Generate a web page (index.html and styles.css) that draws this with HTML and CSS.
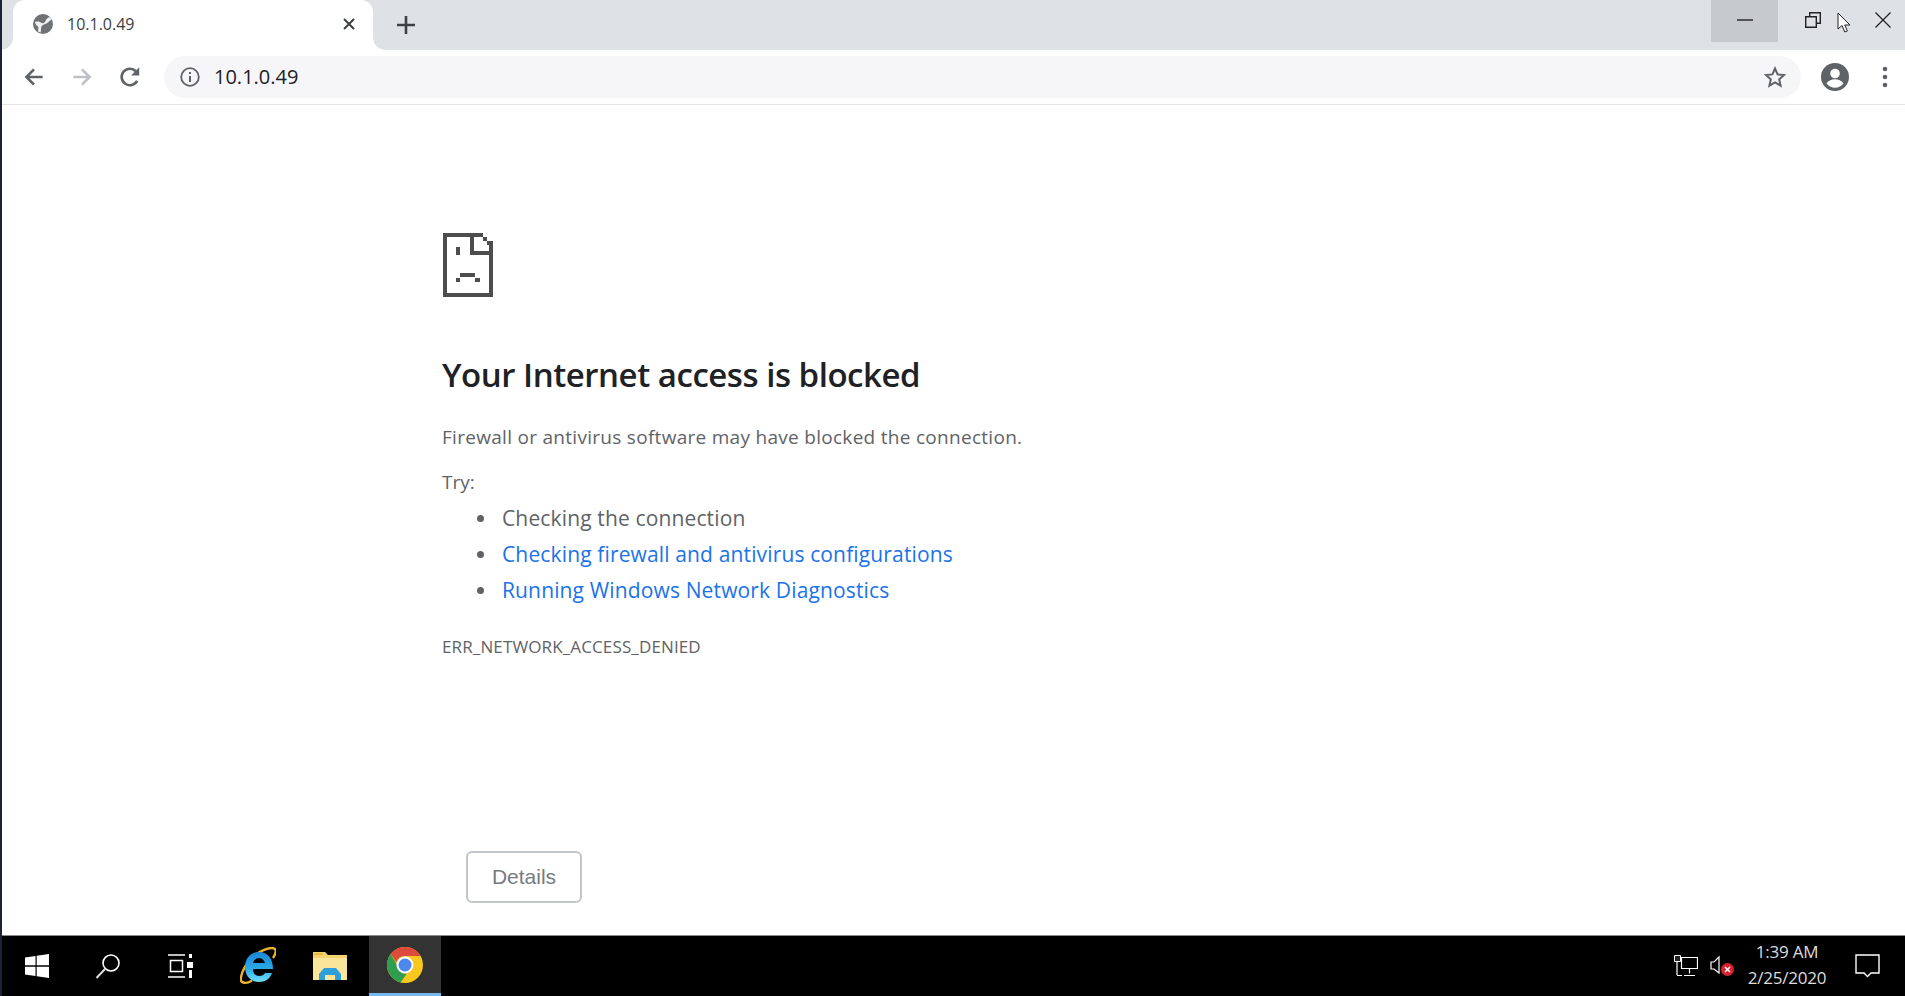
FILE: index.html
```html
<!DOCTYPE html>
<html lang="en">
<head>
<meta charset="utf-8">
<title>10.1.0.49</title>
<link rel="stylesheet" href="styles.css">
</head>
<body>
<div class="tabstrip">
  <div class="tab">
    <svg class="favicon" viewBox="0 0 20 20"><circle cx="10" cy="10" r="10" fill="#6f7377"/><path d="M2 8c3-1 5 0 7 1s3-1 4-3 3-3 4-3l1.500 2.500c-2 1-3 3-5 4s-4 1-5 3 0 4-1 6l-2.500-1c0-2 1-4 0-5s-3-2-3-4.500z" fill="#fff" opacity=".9"/></svg>
    <span class="tab-title">10.1.0.49</span>
    <svg class="tab-close" viewBox="0 0 12 12"><path d="M1 1l10 10M11 1L1 11" stroke="#3c4043" stroke-width="2"/></svg>
  </div>
  <svg class="new-tab" viewBox="0 0 18 18"><path d="M9 0v18M0 9h18" stroke="#3c4043" stroke-width="2.6"/></svg>
  <div class="win-controls">
    <div class="win-btn win-btn-hover"><svg width="16" height="16" viewBox="0 0 16 16"><path d="M0 8h16" stroke="#222" stroke-width="1.4"/></svg></div>
    <div class="win-btn"><svg width="16" height="16" viewBox="0 0 16 16"><path d="M.7 4.7h10.6v10.6H.7zM4.7 4.500V.7h10.600v10.600h-3.800" fill="none" stroke="#222" stroke-width="1.4"/></svg></div>
    <div class="win-btn win-btn-close"><svg width="16" height="16" viewBox="0 0 16 16"><path d="M.5.500l15 15M15.500.500l-15 15" stroke="#222" stroke-width="1.3"/></svg></div>
  </div>
</div>

<div class="toolbar">
  <svg class="nav-icon" viewBox="0 0 24 24"><path d="M20 12H5M12 5l-7 7 7 7" fill="none" stroke="#5f6368" stroke-width="2.4"/></svg>
  <svg class="nav-icon" viewBox="0 0 24 24"><path d="M4 12h15M12 5l7 7-7 7" fill="none" stroke="#bdc1c6" stroke-width="2.4"/></svg>
  <svg class="nav-icon" viewBox="0 0 24 24"><path d="M18.6 15.500A7.600 7.600 0 1 1 17.400 6.700" fill="none" stroke="#5f6368" stroke-width="2.4"/><path d="M20.500 3v7.500H13z" fill="#5f6368"/></svg>
  <div class="omnibox">
    <svg class="info-icon" viewBox="0 0 20 20"><circle cx="10" cy="10" r="8.800" fill="none" stroke="#5f6368" stroke-width="1.8"/><path d="M9 9h2v6H9zM9 5h2v2H9z" fill="#5f6368"/></svg>
    <span class="url">10.1.0.49</span>
    <svg class="star" viewBox="0 0 24 24"><path d="M12 3.500l2.600 5.900 6.400.6-4.800 4.300 1.400 6.300L12 17.300l-5.600 3.300 1.400-6.300L3 10l6.400-.6z" fill="none" stroke="#5f6368" stroke-width="2"/></svg>
  </div>
  <svg class="avatar" viewBox="0 0 28 28"><circle cx="14" cy="14" r="14" fill="#5f6368"/><circle cx="14" cy="10.500" r="4.800" fill="#fff"/><path d="M5.500 20.500c2-3.200 5.200-4.300 8.500-4.300s6.500 1.100 8.500 4.300c-2 2.600-5 4.200-8.500 4.200s-6.500-1.600-8.500-4.200z" fill="#fff"/></svg>
  <svg class="menu-dots" viewBox="0 0 6 22"><circle cx="3" cy="3" r="2.300" fill="#5f6368"/><circle cx="3" cy="11" r="2.300" fill="#5f6368"/><circle cx="3" cy="19" r="2.300" fill="#5f6368"/></svg>
</div>

<main class="page">
  <svg class="sad-doc" viewBox="0 0 50 64" shape-rendering="crispEdges"><path d="M0 0h40v4h4v4h6v56H0zM4 4v56h42V22H27V4zM31 4h9v4h4v4h2v6H31z" fill="#4d4d4d" fill-rule="evenodd"/><path d="M13 14h4v8h-4zM17 40h15v4H17zM13 45h4v4h-4zM32 45h5v4h-5z" fill="#4d4d4d"/></svg>
  <h1 class="err-title">Your Internet access is blocked</h1>
  <p class="err-desc">Firewall or antivirus software may have blocked the connection.</p>
  <p class="try-label">Try:</p>
  <ul class="try-list">
    <li>Checking the connection</li>
    <li><a href="#">Checking firewall and antivirus configurations</a></li>
    <li><a href="#">Running Windows Network Diagnostics</a></li>
  </ul>
  <div class="err-code">ERR_NETWORK_ACCESS_DENIED</div>
  <button class="details-btn">Details</button>
</main>

<div class="taskbar">
  <div class="task-item start">
    <svg width="24" height="24" viewBox="0 0 24 24"><path d="M0 3.500l10.500-1.500v9.300H0zM11.700 1.800L24 0v11.300H11.700zM0 12.700h10.500V22L0 20.500zM11.700 12.700H24V24l-12.300-1.800z" fill="#fff"/></svg>
  </div>
  <div class="task-item search">
    <svg width="26" height="26" viewBox="0 0 26 26"><circle cx="16" cy="10" r="8" fill="none" stroke="#fff" stroke-width="1.600"/><path d="M10 16L1.500 25" stroke="#ddd" stroke-width="2"/></svg>
  </div>
  <div class="task-item taskview">
    <svg width="26" height="24" viewBox="0 0 26 24"><path d="M1 1h17M1 23h17M3.500 6.500h12v11h-12z" fill="none" stroke="#fff" stroke-width="1.500"/><path d="M22 0h3v4h-3zM20 8h6v6h-6zM22 16h3v8h-3z" fill="#fff"/></svg>
  </div>
  <div class="task-item ie">
    <svg width="36" height="38" viewBox="0 0 36 38">
      <defs><linearGradient id="ieblue" x1="0" y1="0" x2="0" y2="1"><stop offset="0" stop-color="#1a86d6"/><stop offset=".55" stop-color="#2aa9e8"/><stop offset="1" stop-color="#6fe0f8"/></linearGradient></defs>
      <path d="M4 35C-2 37 1 24 9 14 17 4 31-1 35 2c1.500 2 0 6-2 9" fill="none" stroke="#e8b32a" stroke-width="2.400"/>
      <path d="M33 22H13c0 5 3 7 6 7 3 0 5-1 6-3h7c-2 6-7 9-13 9-9 0-14-7-14-15S10 5 19 5c9 0 14 7 14 17zM13 16h12c-1-3-3-5-6-5s-5 2-6 5z" fill="url(#ieblue)" fill-rule="evenodd"/>
      <path d="M3 35.500c3 1 6 0 9-2" fill="none" stroke="#e8b32a" stroke-width="2.400"/>
    </svg>
  </div>
  <div class="task-item folder">
    <svg width="34" height="28" viewBox="0 0 34 28"><path d="M0 0h12l3 3h19v25H0z" fill="#f5d36f"/><path d="M0 6h34v22H0z" fill="#fbe59a"/><path d="M1 1h9v2H1z" fill="#e8b84a"/><path d="M6 28v-6l5-6h12l5 6v6h-6v-5H12v5z" fill="#2e9fd8"/></svg>
  </div>
  <div class="task-item chrome">
    <svg width="36" height="36" viewBox="0 0 36 36">
      <circle cx="18" cy="18" r="18" fill="#f9c81e"/>
      <path d="M18 0a18 18 0 0 1 15.600 9H18a9 9 0 0 0-8.600 6.300L3.700 7A18 18 0 0 1 18 0z" fill="#dd4b3e"/>
      <path d="M3.700 7l7.800 13.500A7 7 0 0 0 20 26.500L13.500 35.400A18 18 0 0 1 3.700 7z" fill="#2f9e4f"/>
      <circle cx="18" cy="18" r="8.500" fill="#fff"/>
      <circle cx="18" cy="18" r="6.500" fill="#4d87ee"/>
    </svg>
  </div>
  <div class="tray">
    <svg width="24" height="22" viewBox="0 0 24 22"><path d="M7.500 2.500h16v11h-16zM15.500 13.500v5M10 20.500h11M3 6.500v13.500M3 20.500h5" fill="none" stroke="#fff" stroke-width="1.200"/><path d="M.5.500h6v6h-6z" fill="#222" stroke="#fff"/></svg>
    <svg class="speaker" width="24" height="24" viewBox="0 0 24 24"><path d="M1 8h3l5-5v16l-5-4H1z" fill="none" stroke="#fff" stroke-width="1.200"/><circle cx="17.500" cy="15.500" r="6.500" fill="#d8232f"/><path d="M15 13l5 5M20 13l-5 5" stroke="#fff" stroke-width="1.500"/></svg>
    <div class="clock"><div>1:39 AM</div><div>2/25/2020</div></div>
    <svg class="action" width="25" height="24" viewBox="0 0 25 24"><path d="M1 1h23v18h-8l-3.500 3.500L9 19H1z" fill="none" stroke="#fff" stroke-width="1.400"/></svg>
  </div>
</div>

<svg class="cursor" width="14" height="22" viewBox="0 0 14 22"><path d="M1 1v16l4-3.500 2.800 6.500 2.600-1.100L7.700 13H13z" fill="#fff" stroke="#222" stroke-width="1"/></svg>
</body>
</html>
```

FILE: styles.css
```css
html, body {
    height: 100%;
    margin: 0;
}
body {
    display: flex;
    flex-direction: column;
    overflow: hidden;
    background: #fff;
    border-left: 2px solid #1a2238;
    box-sizing: border-box;
    font-family: "Open Sans", "Liberation Sans", sans-serif;
}

/* tab strip */
.tabstrip {
    display: flex;
    align-items: flex-start;
    height: 50px;
    flex: none;
    background: #dee1e6;
}
.tab {
    position: relative;
    display: flex;
    align-items: center;
    width: 360px;
    height: 50px;
    margin-left: 11px;
    padding: 0 18px 2px 20px;
    box-sizing: border-box;
    background: #fff;
    border-radius: 12px 12px 0 0;
}
.tab::before,
.tab::after {
    content: "";
    position: absolute;
    bottom: 0;
    width: 12px;
    height: 12px;
}
.tab::before {
    left: -12px;
    background: radial-gradient(circle at 0 0, #dee1e6 11.5px, #fff 12px);
}
.tab::after {
    right: -12px;
    background: radial-gradient(circle at 100% 0, #dee1e6 11.5px, #fff 12px);
}
.favicon {
    width: 20px;
    height: 20px;
}
.tab-title {
    flex: 1;
    margin-left: 14px;
    font-size: 16px;
    color: #3c4043;
}
.tab-close {
    width: 12px;
    height: 12px;
}
.new-tab {
    width: 18px;
    height: 18px;
    margin: 16px 0 0 24px;
}
.win-controls {
    display: flex;
    margin-left: auto;
}
.win-btn {
    display: flex;
    align-items: center;
    justify-content: center;
    width: 70px;
    height: 42px;
    box-sizing: border-box;
}
.win-btn svg {
    margin-top: -2px;
}
.win-btn-hover {
    width: 67px;
    background: #c6c9cd;
}
.win-btn-close {
    width: 57px;
    padding-left: 12px;
}

/* toolbar */
.toolbar {
    display: flex;
    align-items: center;
    height: 55px;
    flex: none;
    padding: 0 0 1px 0;
    box-sizing: border-box;
    background: #fff;
    border-bottom: 1px solid #e3e4e8;
}
.nav-icon {
    width: 26px;
    height: 26px;
    margin-left: 20px;
    margin-right: 2px;
}
.nav-icon:first-child {
    margin-left: 19px;
}
.omnibox {
    display: flex;
    align-items: center;
    flex: 1;
    height: 42px;
    margin-left: 19px;
    padding: 0 14px 0 16px;
    background: #f6f6f9;
    border-radius: 21px;
}
.info-icon {
    width: 20px;
    height: 20px;
}
.url {
    flex: 1;
    margin-left: 14px;
    font-size: 20px;
    color: #202124;
}
.star {
    width: 24px;
    height: 24px;
}
.avatar {
    width: 28px;
    height: 28px;
    margin-left: 20px;
}
.menu-dots {
    width: 6px;
    height: 22px;
    margin: 0 17px 0 33px;
}

/* error page */
.page {
    flex: 1;
    padding: 128px 0 0 440px;
    box-sizing: border-box;
    color: #5f6368;
}
.sad-doc {
    display: block;
    width: 50px;
    height: 64px;
    margin-left: 1px;
}
.err-title {
    margin: 54px 0 0;
    font-size: 33px;
    line-height: 48px;
    font-weight: 600;
    letter-spacing: -0.47px;
    color: #202124;
}
.err-desc {
    margin: 24px 0 0;
    font-size: 19px;
    line-height: 28px;
    letter-spacing: 0.29px;
}
.try-label {
    margin: 17px 0 0;
    font-size: 19px;
    line-height: 28px;
}
.try-list {
    margin: 4px 0 0;
    padding: 0 0 0 35px;
    list-style: none;
    font-size: 21px;
    line-height: 36px;
    letter-spacing: 0.14px;
}
.try-list li {
    display: flex;
    align-items: center;
    gap: 18px;
}
.try-list li::before {
    content: "";
    width: 7px;
    height: 7px;
    border-radius: 50%;
    background: #5f6368;
}
.try-list a {
    color: #1a73e8;
    text-decoration: none;
}
.err-code {
    margin-top: 27px;
    font-size: 17px;
    line-height: 24px;
    letter-spacing: 0.13px;
}
.details-btn {
    display: block;
    width: 116px;
    height: 52px;
    margin: 192px 0 0 24px;
    background: #fff;
    border: 2px solid #c2c5c9;
    border-radius: 6px;
    font-family: "Liberation Sans", sans-serif;
    font-size: 21px;
    color: #777b80;
}

/* taskbar */
.taskbar {
    display: flex;
    align-items: center;
    height: 61px;
    flex: none;
    background: #000;
    border-top: 1px solid #8a8a8a;
    box-sizing: border-box;
}
.task-item {
    display: flex;
    align-items: center;
    justify-content: center;
    height: 100%;
    width: 72px;
    box-sizing: border-box;
}
.start {
    width: 70px;
}
.ie {
    margin-left: 6px;
}
.chrome {
    margin-left: 3px;
    background: #333;
    border-bottom: 3px solid #76b9ed;
}
.tray {
    display: flex;
    align-items: center;
    margin-left: auto;
    padding-right: 25px;
}
.speaker {
    margin-left: 12px;
}
.clock {
    width: 100px;
    margin-left: 3px;
    padding-bottom: 3px;
    text-align: center;
    font-size: 17px;
    line-height: 26px;
    letter-spacing: -0.2px;
    color: #ddd;
}
.action {
    margin-left: 18px;
}

/* mouse pointer over the window controls */
.cursor {
    position: absolute;
    left: 1837px;
    top: 12px;
}
```
